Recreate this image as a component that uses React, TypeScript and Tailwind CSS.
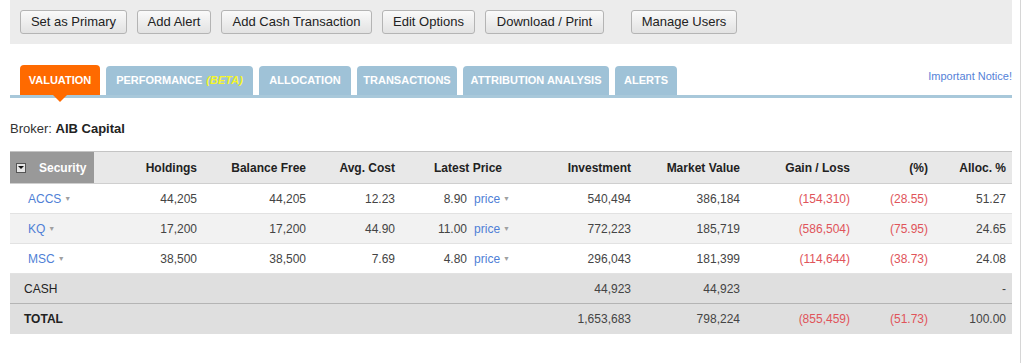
import React from 'react';

const buttons = [
  { label: 'Set as Primary', w: 'w-[107px]' },
  { label: 'Add Alert', w: 'w-[74px]' },
  { label: 'Add Cash Transaction', w: 'w-[151px]' },
  { label: 'Edit Options', w: 'w-[93px]' },
  { label: 'Download / Print', w: 'w-[119px]' },
];

const tabs = [
  { label: 'PERFORMANCE', beta: true, w: 'w-[147px]' },
  { label: 'ALLOCATION', w: 'w-[92px]' },
  { label: 'TRANSACTIONS', w: 'w-[100px]' },
  { label: 'ATTRIBUTION ANALYSIS', w: 'w-[146px]' },
  { label: 'ALERTS', w: 'w-[62px]' },
];

const rows = [
  { sym: 'ACCS', hold: '44,205', free: '44,205', avg: '12.23', price: '8.90', inv: '540,494', mv: '386,184', gl: '(154,310)', pct: '(28.55)', alloc: '51.27' },
  { sym: 'KQ', hold: '17,200', free: '17,200', avg: '44.90', price: '11.00', inv: '772,223', mv: '185,719', gl: '(586,504)', pct: '(75.95)', alloc: '24.65' },
  { sym: 'MSC', hold: '38,500', free: '38,500', avg: '7.69', price: '4.80', inv: '296,043', mv: '181,399', gl: '(114,644)', pct: '(38.73)', alloc: '24.08' },
];

const Caret = () => <span className="ml-[3px] inline-block align-middle text-[7px] text-[#a0a0a0]">▼</span>;

export default function App() {
  return (
    <div className="relative h-[363px] w-[1024px] overflow-hidden bg-white font-['Liberation_Sans',Arial,sans-serif] text-[#333]">
      {/* right edge line */}
      <div className="absolute right-[3px] top-0 h-full w-px bg-[#d6d6d6]" />

      {/* toolbar */}
      <div className="ml-[10px] flex h-[44px] w-[1002px] items-center gap-[10px] bg-[#ececec] pl-[10px]">
        {buttons.map((b) => (
          <button
            key={b.label}
            className={`${b.w} h-[24px] rounded-[3px] border border-[#b4b4b4] bg-gradient-to-b from-[#fafafa] to-[#e2e2e2] text-[13px] text-[#222]`}
          >
            {b.label}
          </button>
        ))}
        <button className="ml-[17px] h-[24px] w-[106px] rounded-[3px] border border-[#b4b4b4] bg-gradient-to-b from-[#fafafa] to-[#e2e2e2] text-[13px] text-[#222]">
          Manage Users
        </button>
      </div>

      {/* tabs */}
      <div className="mt-[21px] ml-[10px] w-[1002px]">
        <div className="flex h-[30px] items-end justify-between">
          <div className="flex items-end gap-[6px] pl-[10px]">
            <div className="relative flex h-[30px] w-[80px] items-center justify-center rounded-t-[4px] bg-[#ff6a00] text-[11px] font-bold text-white">
              VALUATION
              <div className="absolute left-[33px] top-[30px] h-0 w-0 border-x-[7px] border-t-[7px] border-x-transparent border-t-[#ff6a00]" />
            </div>
            {tabs.map((t) => (
              <div
                key={t.label}
                className={`${t.w} flex h-[29px] items-center justify-center rounded-t-[4px] bg-[#9fc2d7] text-[11px] font-bold text-white`}
              >
                {t.label}
                {t.beta && <span className="ml-[4px] italic text-[#f6f62a]">(BETA)</span>}
              </div>
            ))}
          </div>
          <a className="mb-[11px] text-[11px] text-[#5582d8]">Important Notice!</a>
        </div>
        <div className="h-[3px] w-full bg-[#a8c8da]" />
      </div>

      {/* broker */}
      <div className="mt-[23px] ml-[10px] text-[13px] leading-[16px] text-[#333]">
        Broker: <span className="font-bold text-[#222]">AIB Capital</span>
      </div>

      {/* table */}
      <table className="mt-[14px] ml-[10px] w-[1002px] table-fixed border-collapse text-[12px]">
        <colgroup>
          <col className="w-[84px]" />
          <col className="w-[111px]" />
          <col className="w-[109px]" />
          <col className="w-[89px]" />
          <col className="w-[117px]" />
          <col className="w-[120px]" />
          <col className="w-[109px]" />
          <col className="w-[110px]" />
          <col className="w-[78px]" />
          <col className="w-[75px]" />
        </colgroup>
        <thead>
          <tr className="h-[32px] border-t border-b border-t-[#c4c4c4] border-b-[#cfcfcf] bg-[#e8e8e8] text-[12px] font-bold text-[#222]">
            <th className="bg-[#999999] pl-[6px] text-left text-white">
              <div className="flex items-center">
                <span className="flex h-[10px] w-[10px] items-center justify-center border border-[#555] bg-[#e6e6e6]">
                  <span className="h-0 w-0 border-x-[3px] border-t-[3px] border-x-transparent border-t-[#111]" />
                </span>
                <span className="ml-[13px]">Security</span>
              </div>
            </th>
            <th className="pr-[8px] text-right">Holdings</th>
            <th className="pr-[8px] text-right">Balance Free</th>
            <th className="pr-[8px] text-right">Avg. Cost</th>
            <th className="pr-[18px] text-right">Latest Price</th>
            <th className="pr-[9px] text-right">Investment</th>
            <th className="pr-[9px] text-right">Market Value</th>
            <th className="pr-[9px] text-right">Gain / Loss</th>
            <th className="pr-[9px] text-right">(%)</th>
            <th className="pr-[6px] text-right">Alloc. %</th>
          </tr>
        </thead>
        <tbody className="text-[#444]">
          {rows.map((r, i) => (
            <tr key={r.sym} className={`h-[30px] border-b border-[#e2e2e2] ${i === 1 ? 'bg-[#f2f2f2]' : 'bg-white'}`}>
              <td className="pl-[18px] text-[#4f7fd6]">
                {r.sym}
                <Caret />
              </td>
              <td className="pr-[8px] text-right">{r.hold}</td>
              <td className="pr-[8px] text-right">{r.free}</td>
              <td className="pr-[8px] text-right">{r.avg}</td>
              <td className="pr-[10px] text-right">
                {r.price}
                <span className="ml-[7px] text-[#4f7fd6]">price</span>
                <Caret />
              </td>
              <td className="pr-[9px] text-right">{r.inv}</td>
              <td className="pr-[9px] text-right">{r.mv}</td>
              <td className="pr-[9px] text-right text-[#e0545a]">{r.gl}</td>
              <td className="pr-[9px] text-right text-[#e0545a]">{r.pct}</td>
              <td className="pr-[6px] text-right">{r.alloc}</td>
            </tr>
          ))}
          <tr className="h-[30px] border-t border-[#bcbcbc] bg-[#dfdfdf]">
            <td className="pl-[14px] text-[#222]">CASH</td>
            <td />
            <td />
            <td />
            <td />
            <td className="pr-[9px] text-right">44,923</td>
            <td className="pr-[9px] text-right">44,923</td>
            <td />
            <td />
            <td className="pr-[6px] text-right">-</td>
          </tr>
          <tr className="h-[30px] border-t border-[#b4b4b4] bg-[#dfdfdf]">
            <td className="pl-[14px] font-bold text-[#222]">TOTAL</td>
            <td />
            <td />
            <td />
            <td />
            <td className="pr-[9px] text-right">1,653,683</td>
            <td className="pr-[9px] text-right">798,224</td>
            <td className="pr-[9px] text-right text-[#e0545a]">(855,459)</td>
            <td className="pr-[9px] text-right text-[#e0545a]">(51.73)</td>
            <td className="pr-[6px] text-right">100.00</td>
          </tr>
        </tbody>
      </table>
    </div>
  );
}
